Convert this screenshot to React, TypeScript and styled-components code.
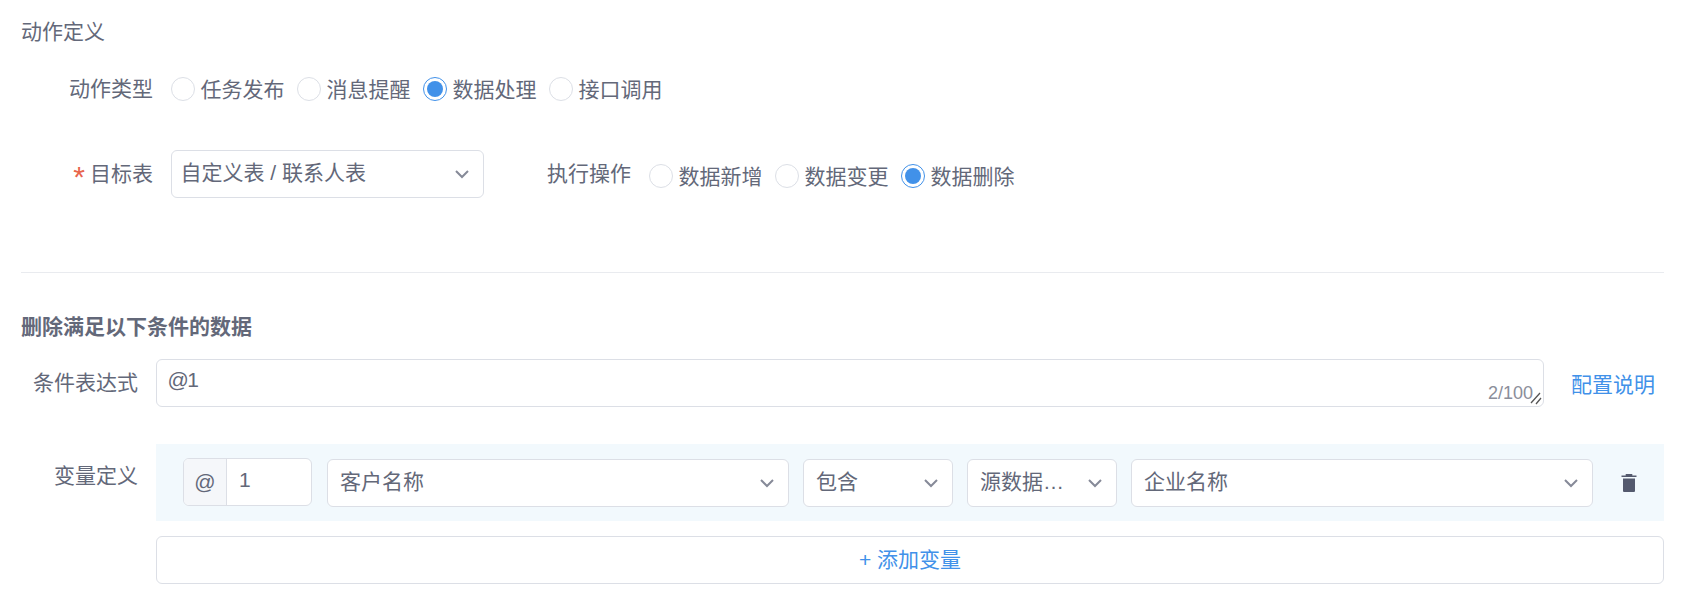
import React from "react";
import styled, { createGlobalStyle } from "styled-components";

const Global = createGlobalStyle`
  html, body { margin: 0; padding: 0; background: #fff; }
  body {
    font-family: "Liberation Sans", "Noto Sans CJK SC", sans-serif;
    font-size: 21px;
    color: #636879;
  }
  * { box-sizing: border-box; }
`;

const Page = styled.div`
  width: 1685px;
  height: 603px;
  padding: 20px 21px 0;
  overflow: hidden;
`;
const Title = styled.div`
  line-height: 24px;
`;
const Row = styled.div<{ $top: number }>`
  display: flex;
  align-items: center;
  height: 48px;
  margin-top: ${(p) => p.$top}px;
`;
const Label = styled.label<{ $width?: number }>`
  flex: none;
  width: ${(p) => p.$width ?? 132}px;
  margin-right: 18px;
  text-align: right;
  line-height: 48px;
  white-space: nowrap;
`;
const Required = styled.span`
  display: inline-block;
  color: #e8644c;
  font-size: 30px;
  line-height: 0;
  vertical-align: -6px;
  margin-right: 5px;
`;
const RadioGroup = styled.div<{ $shift?: number }>`
  display: flex;
  align-items: center;
  gap: 12.5px;
  margin-top: ${(p) => p.$shift ?? 0}px;
`;
const RadioItem = styled.span`
  display: flex;
  align-items: center;
  gap: 5.5px;
  white-space: nowrap;
`;
const RadioText = styled.span`
  margin-bottom: 3px;
`;
const RadioDot = styled.span<{ $checked?: boolean }>`
  width: 24px;
  height: 24px;
  border-radius: 50%;
  border: 1.5px solid ${(p) => (p.$checked ? "#4191e9" : "#dcdfe6")};
  background: #fff;
  display: flex;
  align-items: center;
  justify-content: center;
  &::after {
    content: "";
    display: ${(p) => (p.$checked ? "block" : "none")};
    width: 16px;
    height: 16px;
    border-radius: 50%;
    background: #4191e9;
  }
`;
const SelectBox = styled.div<{ $width?: number; $grow?: boolean; $pad?: number }>`
  position: relative;
  flex: ${(p) => (p.$grow ? "1 1 0" : "none")};
  width: ${(p) => (p.$width ? `${p.$width}px` : "auto")};
  min-width: 0;
  height: 48px;
  display: flex;
  align-items: center;
  justify-content: space-between;
  padding: 0 13px 2px ${(p) => p.$pad ?? 12}px;
  background: #fff;
  border: 1.5px solid #dcdfe6;
  border-radius: 6px;
  line-height: 42px;
  white-space: nowrap;
`;
const Chevron = styled.svg`
  flex: none;
  width: 16px;
  height: 10px;
  margin-top: 2px;
  color: #868a98;
`;
const Arrow = () => (
  <Chevron viewBox="0 0 16 10" fill="none">
    <path d="M2 2 L8 8 L14 2" stroke="currentColor" strokeWidth="2" />
  </Chevron>
);
const Divider = styled.div`
  height: 1px;
  background: #e9ebef;
  margin-top: 74px;
`;
const SectionTitle = styled.div`
  margin-top: 42px;
  line-height: 24px;
  font-weight: 700;
`;
const TextArea = styled.div`
  position: relative;
  flex: none;
  width: 1388px;
  height: 48px;
  padding: 0 10.5px;
  border: 1.5px solid #dcdfe6;
  border-radius: 6px;
  line-height: 40px;
`;
const ExprText = styled.span`
  letter-spacing: -1.5px;
`;
const Counter = styled.span`
  position: absolute;
  right: 10px;
  bottom: 1px;
  font-size: 18px;
  line-height: 24px;
  color: #8b8e9a;
`;
const Resizer = styled.svg`
  position: absolute;
  right: 1px;
  bottom: 1px;
  width: 12px;
  height: 14px;
`;
const LinkText = styled.a`
  margin-left: 27px;
  color: #4191e9;
  white-space: nowrap;
`;
const VarSection = styled.div`
  display: flex;
  margin-top: 37px;
`;
const VarLabel = styled(Label)`
  line-height: 42px;
  padding-top: 11px;
  height: 48px;
`;
const VarBody = styled.div`
  flex: 1;
  min-width: 0;
  display: flex;
  flex-direction: column;
  gap: 15px;
`;
const VarPanel = styled.div`
  display: flex;
  align-items: center;
  gap: 14px;
  height: 77px;
  padding: 0 25px 0 27px;
  background: #f2f9fd;
`;
const AtInput = styled.div`
  flex: none;
  display: flex;
  width: 129px;
  height: 48px;
  margin: -1px 1px 0 0;
  border: 1.5px solid #dcdfe6;
  border-radius: 6px;
  overflow: hidden;
  background: #fff;
`;
const AtPrefix = styled.span`
  flex: none;
  width: 43px;
  display: flex;
  align-items: center;
  justify-content: center;
  background: #f5f7fa;
  border-right: 1.5px solid #dcdfe6;
`;
const AtValue = styled.span`
  padding-left: 12px;
  line-height: 42px;
`;
const Ellipsis = styled.span`
  overflow: hidden;
  text-overflow: ellipsis;
`;
const TrashButton = styled.svg`
  flex: none;
  width: 20px;
  height: 20px;
  margin-left: 12px;
  color: #545a6e;
`;
const AddButton = styled.button`
  display: block;
  width: 100%;
  height: 48px;
  padding: 0 0 5px;
  background: #fff;
  border: 1.5px solid #dcdfe6;
  border-radius: 6px;
  font: inherit;
  color: #4191e9;
`;

const Radio = ({ text, checked }: { text: string; checked?: boolean }) => (
  <RadioItem>
    <RadioDot $checked={checked} />
    <RadioText>{text}</RadioText>
  </RadioItem>
);

export default function App() {
  return (
    <Page>
      <Global />
      <Title>动作定义</Title>
      <Row $top={21}>
        <Label>动作类型</Label>
        <RadioGroup>
          <Radio text="任务发布" />
          <Radio text="消息提醒" />
          <Radio text="数据处理" checked />
          <Radio text="接口调用" />
        </RadioGroup>
      </Row>
      <Row $top={37}>
        <Label>
          <Required>*</Required>目标表
        </Label>
        <SelectBox $width={313} $pad={8.5}>
          自定义表 / 联系人表
          <Arrow />
        </SelectBox>
        <Label $width={147}>执行操作</Label>
        <RadioGroup $shift={4}>
          <Radio text="数据新增" />
          <Radio text="数据变更" />
          <Radio text="数据删除" checked />
        </RadioGroup>
      </Row>
      <Divider />
      <SectionTitle>删除满足以下条件的数据</SectionTitle>
      <Row $top={20}>
        <Label $width={117}>条件表达式</Label>
        <TextArea>
          <ExprText>@1</ExprText>
          <Counter>2/100</Counter>
          <Resizer viewBox="0 0 12 14" fill="none">
            <path d="M1 12 L10 2 M6 13 L11 7" stroke="#555" strokeWidth="1.3" />
          </Resizer>
        </TextArea>
        <LinkText>配置说明</LinkText>
      </Row>
      <VarSection>
        <VarLabel $width={117}>变量定义</VarLabel>
        <VarBody>
          <VarPanel>
            <AtInput>
              <AtPrefix>@</AtPrefix>
              <AtValue>1</AtValue>
            </AtInput>
            <SelectBox $grow>
              客户名称
              <Arrow />
            </SelectBox>
            <SelectBox $width={150}>
              包含
              <Arrow />
            </SelectBox>
            <SelectBox $width={150}>
              <Ellipsis>源数据…</Ellipsis>
              <Arrow />
            </SelectBox>
            <SelectBox $grow>
              企业名称
              <Arrow />
            </SelectBox>
            <TrashButton viewBox="0 0 20 20">
              <path
                fill="currentColor"
                d="M6.7 1 L13.3 1 L13.3 2.6 L17.5 2.6 L17.5 4 L2.5 4 L2.5 2.6 L6.7 2.6 Z M4 5.6 L16 5.6 L16 18 Q16 19 15 19 L5 19 Q4 19 4 18 Z"
              />
            </TrashButton>
          </VarPanel>
          <AddButton>+ 添加变量</AddButton>
        </VarBody>
      </VarSection>
    </Page>
  );
}
